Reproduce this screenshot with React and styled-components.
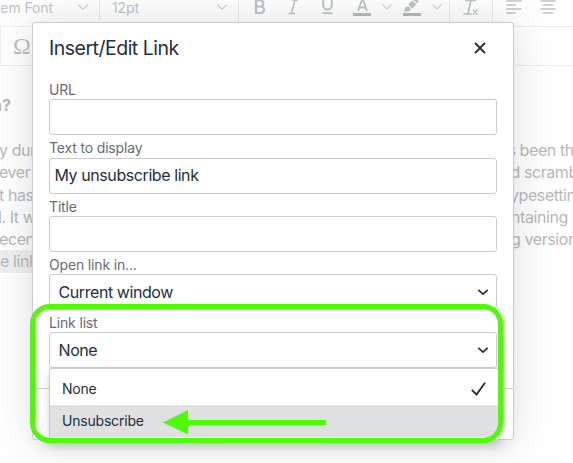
import React from "react";
import styled, { createGlobalStyle } from "styled-components";

const Global = createGlobalStyle`
  * { box-sizing: border-box; }
  body { margin: 0; background: #fff; overflow: hidden; font-family: Inter, "Liberation Sans", sans-serif; }
`;
const Page = styled.div`
  position: relative;
  width: 573px;
  height: 463px;
  overflow: hidden;
  background: #fff;
`;
const Toolbar = styled.div`
  height: 27px;
  display: flex;
  overflow: hidden;
  border-bottom: 1px solid #f0f0f0;
`;
const Group = styled.div`
  flex: none;
  width: ${(p) => p.$w}px;
  border-right: ${(p) => (p.$last ? "0" : "1px solid #ededed")};
`;
const FontPick = styled(Group)`
  display: flex;
  align-items: flex-start;
  justify-content: space-between;
  padding: 0 11px 0 ${(p) => p.$pad}px;
  font-size: 14px;
  line-height: 16px;
  letter-spacing: -0.1px;
  color: #c1c4c8;
  white-space: nowrap;
  svg { margin-top: 3px; }
`;
const Drawing = styled.svg`
  display: block;
  flex: none;
  overflow: visible;
`;
const SecondBar = styled.div`
  height: 39px;
  display: flex;
  align-items: center;
  padding-left: 12px;
  border-left: 1px solid #f0f0f0;
  border-bottom: 1px solid #ebebeb;
  color: #bec1c4;
  font: 24px/30px "Liberation Serif", serif;
`;
const Heading = styled.div`
  height: 73px;
  padding-top: 28px;
  margin-left: -8px;
  font-size: 16px;
  line-height: 22px;
  font-weight: 700;
  color: #b7b7b7;
`;
const Line = styled.div`
  display: flex;
  height: 22.3px;
  font-size: 16px;
  line-height: 22px;
  letter-spacing: -0.42px;
  color: #b9b9b9;
  white-space: nowrap;
`;
const Before = styled.span`
  flex: none;
  width: ${(p) => p.$next}px;
`;
const Selected = styled.span`
  background: #efefef;
`;
const Dialog = styled.section`
  position: absolute;
  left: 32px;
  top: 22px;
  width: 482px;
  height: 418px;
  display: flex;
  flex-direction: column;
  background: #fff;
  border: 1px solid #ccc;
  border-radius: 3px;
  box-shadow: 0 16px 16px -10px rgba(34, 47, 62, 0.15), 0 0 40px 1px rgba(34, 47, 62, 0.15);
`;
const Header = styled.header`
  height: 59px;
  flex: none;
  display: flex;
  justify-content: space-between;
  padding: 11px 27px 0 16px;
  svg { margin-top: 8px; }
`;
const Title = styled.h1`
  margin: 0;
  font-size: 19.5px;
  line-height: 28px;
  font-weight: 400;
  letter-spacing: -0.5px;
  color: #222f3e;
`;
const Body = styled.div`
  flex: 1;
  padding: 0 16px;
`;
const Field = styled.div`
  height: 58.3px;
`;
const Label = styled.label`
  display: block;
  height: 17.3px;
  font-size: 14px;
  line-height: 15px;
  letter-spacing: -0.16px;
  color: #646d78;
`;
const Control = styled.div`
  height: 36px;
  display: flex;
  align-items: center;
  justify-content: space-between;
  padding: 0 8px ${(p) => (p.$select ? 0 : 1)}px ${(p) => (p.$select ? 8.5 : 4.5)}px;
  border: 1px solid #ccc;
  border-radius: 3px;
  background: #fff;
  font-size: 16px;
  letter-spacing: -0.42px;
  color: #222f3e;
`;
const Footer = styled.footer`
  height: 51px;
  border-top: 1px solid #ccc;
`;
const Menu = styled.div`
  position: absolute;
  left: 49px;
  top: 368px;
  width: 450px;
  height: 73px;
  padding-top: 4px;
  border: 1px solid #ccc;
  border-radius: 3px;
  background: #fff;
  box-shadow: 0 4px 8px rgba(34, 47, 62, 0.18);
`;
const Option = styled.div`
  height: 32px;
  display: flex;
  align-items: center;
  justify-content: space-between;
  padding: 0 12px 1px;
  background: ${(p) => (p.$active ? "#dee0e2" : "#fff")};
  font-size: 14px;
  line-height: 17px;
  letter-spacing: -0.2px;
  color: #222f3e;
`;
const Highlight = styled.div`
  position: absolute;
  left: 30px;
  top: 304px;
  width: 473px;
  height: 139px;
  border: 5px solid #4dfc00;
  border-radius: 20px;
`;
const Arrow = styled.svg`
  position: absolute;
  left: 163px;
  top: 409px;
`;

const Chevron = ({ color = "#222f3e", weight = 1.7 }) => (
  <Drawing width="10" height="8" viewBox="0 0 10 8">
    <path d="M.3 1.800 5 6.200 9.700 1.800" fill="none" stroke={color} strokeWidth={weight} />
  </Drawing>
);

const FormatIcons = () => (
  <Drawing width="205" height="26" viewBox="0 0 205 26" fill="none" stroke="#c0c3c6">
    <path d="M17 .5V13h4.800a3.200 3.200 0 0 0 0-6.500H17h4.300a3 3 0 0 0 0-6Z" strokeWidth="2.200" />
    <path d="M56 0 52.500 13.200M49.500 13.500h6.500M53.500 .5h5" strokeWidth="1.500" />
    <path d="M84.200 0v5.300a4.300 4.300 0 0 0 8.600 0V0" strokeWidth="2" />
    <path d="M83.500 13.200h10" strokeWidth="1.800" />
    <path d="m119 11 3.600-10h1.800l3.600 10M120.500 7.500h6" strokeWidth="1.900" />
    <path d="M114 14.500h18" stroke="#b9b9b9" strokeWidth="3" />
    <path d="m143.500 4.500 4.500 4.500 4.500-4.500" strokeWidth="1.400" stroke="#d4d6d8" />
    <path d="M164.500 11.500c1.500-1 1-3.500 2.700-4.700 2-1.200 4.800.8 4.200 3-.5 1.500-2.500 1.700-6.900 1.700Z" fill="#c0c3c6" stroke="none" />
    <path d="m169.300 5 3.600-4.500 4.400 3.600-4 4.300ZM173.600-.5h4.700c1.500 1 1.200 2.200-.3 3.700Z" fill="#c0c3c6" stroke="none" />
    <path d="M164 14.500h18" stroke="#b9b9b9" strokeWidth="3" />
    <path d="m193.500 4.500 4.500 4.500 4.500-4.500" strokeWidth="1.400" stroke="#d4d6d8" />
  </Drawing>
);

const ClearIcon = () => (
  <Drawing width="42" height="26" viewBox="0 0 42 26" fill="none" stroke="#c0c3c6">
    <path d="M15 .5h11M21 0l-3 13.500" strokeWidth="1.700" />
    <path d="M13.500 14h8m1.500-4 4.500 4.500m0-4.500-4.500 4.500" strokeWidth="1.400" />
  </Drawing>
);

const AlignIcons = () => (
  <Drawing width="80" height="26" viewBox="0 0 80 26" fill="none" stroke="#c0c3c6" strokeWidth="1.700" strokeLinecap="round">
    <path d="M14 1h14M14 5h8M14 9h14M14 13h8M48 1h14M50.500 5h9M48 9h14M50.500 13h9" />
  </Drawing>
);

const Shifted = styled.span`
  margin-left: ${(p) => p.$x}px;
`;

const lines = [
  { start: "y dum", end: "s been the", x: -1, next: 507.5 },
  { start: "ever", end: "d scramble", x: -1, next: 510.5 },
  { start: "t has", end: "ypesetting", x: -1, next: 510 },
  { start: "l. It w", end: "ntaining", x: -2, next: 511 },
  { start: "ecent", end: "g version", x: -1, next: 511 },
];

export default function App() {
  return (
    <Page>
      <Global />
      <Toolbar>
        <FontPick $w={100} $pad={0}>
          <Shifted $x={-4}>tem Font</Shifted>
          <Chevron color="#d0d2d4" weight={1.3} />
        </FontPick>
        <FontPick $w={139} $pad={12}>
          <span>12pt</span>
          <Chevron color="#d0d2d4" weight={1.3} />
        </FontPick>
        <Group $w={211}><FormatIcons /></Group>
        <Group $w={43}><ClearIcon /></Group>
        <Group $w={80} $last><AlignIcons /></Group>
      </Toolbar>
      <SecondBar>Ω</SecondBar>
      <Heading>n?</Heading>
      {lines.map((line) => (
        <Line key={line.start}>
          <Before $next={line.next}><Shifted $x={line.x}>{line.start}</Shifted></Before>
          <span>{line.end}</span>
        </Line>
      ))}
      <Line><Selected>e link</Selected></Line>

      <Dialog>
        <Header>
          <Title>Insert/Edit Link</Title>
          <Drawing width="12" height="12" viewBox="0 0 12 12">
            <path d="m1 1 10 10M11 1 1 11" stroke="#222f3e" strokeWidth="1.800" />
          </Drawing>
        </Header>
        <Body>
          <Field><Label>URL</Label><Control /></Field>
          <Field><Label>Text to display</Label><Control>My unsubscribe link</Control></Field>
          <Field><Label>Title</Label><Control /></Field>
          <Field><Label>Open link in...</Label><Control $select>Current window<Chevron /></Control></Field>
          <Field><Label>Link list</Label><Control $select>None<Chevron /></Control></Field>
        </Body>
        <Footer />
      </Dialog>
      <Menu>
        <Option>
          None
          <Drawing width="15" height="14" viewBox="0 0 15 14">
            <path d="m.8 7.800 4.700 4.700L14 .8" fill="none" stroke="#222f3e" strokeWidth="1.900" />
          </Drawing>
        </Option>
        <Option $active>Unsubscribe</Option>
      </Menu>
      <Highlight />
      <Arrow width="164" height="26" viewBox="0 0 164 26" fill="#4dfc00">
        <path d="M0 13.500 25 1v10h138v5H25v9.500Z" />
      </Arrow>
    </Page>
  );
}
